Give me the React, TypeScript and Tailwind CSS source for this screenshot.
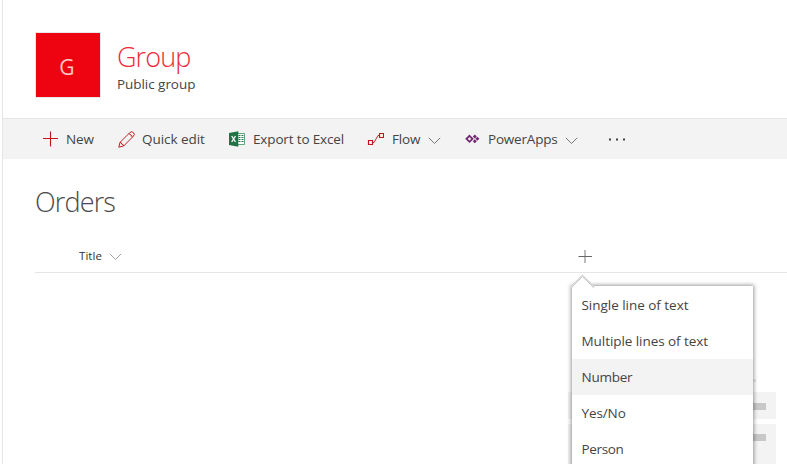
import type { ReactNode } from "react";

function Chevron({ className, color = "#767676" }: { className?: string; color?: string }) {
  return (
    <svg width="13" height="8" viewBox="0 0 13 8" fill="none" className={className}>
      <path d="M0.8 0.8 6.5 6.5 12.2 0.8" stroke={color} strokeWidth="1" />
    </svg>
  );
}

function PlusIcon() {
  return (
    <svg width="16" height="16" viewBox="0 0 16 16" fill="none" stroke="#c4141e" strokeWidth="1.1">
      <path d="M8.5 0.5v15M1 7.5h15" />
    </svg>
  );
}

function PencilIcon() {
  return (
    <svg width="17" height="17" viewBox="0 0 17 17" fill="none" stroke="#c4141e" strokeWidth="0.95">
      <path d="M0.8 16.2 2 11.4 11.8 1.6a2.4 2.4 0 0 1 3.6 3.6L5.6 15ZM2 11.4q1.8 0 1.8 1.8 1.8 0 1.8 1.8M10.8 2.6q2.6 1 3.6 3.6" />
    </svg>
  );
}

function ExcelIcon() {
  return (
    <svg width="16" height="16" viewBox="0 0 16 16">
      <path d="M8 2.5h7.5v11H8z" fill="#fff" stroke="#4f9a6e" strokeWidth="0.9" />
      <path d="M9.5 4.5h2M12.5 4.5h2M9.5 6.5h2M12.5 6.5h2M9.5 8.5h2M12.5 8.5h2M9.5 10.5h2M12.5 10.5h2" stroke="#217346" />
      <path d="M0 2 9.3 0.3v15.4L0 14Z" fill="#217346" />
      <path d="m2.7 5 3.8 6M6.5 5l-3.8 6" stroke="#fff" strokeWidth="1.3" />
    </svg>
  );
}

function FlowIcon() {
  return (
    <svg width="17" height="16" viewBox="0 0 17 16" fill="none" stroke="#c4141e">
      <path d="M1.5 9.5h4v4h-4zM12.5 2.5h4v4h-4z" strokeWidth="1.15" />
      <path d="M5.5 11.5H7l4-7h1.5" strokeWidth="0.9" />
    </svg>
  );
}

function PowerAppsIcon() {
  return (
    <svg width="15" height="16" viewBox="0 0 15 16" fill="none" stroke="#742774">
      <path d="m4.5 4.8 3 3-3 3-3-3Z" strokeWidth="1.8" />
      <path d="m9.8 3.4 2 2-2 2-2-2ZM12.4 5.8l2 2-2 2-2-2ZM9.8 8.2l2 2-2 2-2-2Z" fill="#742774" stroke="none" />
    </svg>
  );
}

function Command({ icon, children, className }: { icon: ReactNode; children: ReactNode; className: string }) {
  return (
    <button className={`flex h-full shrink-0 items-center whitespace-nowrap text-left ${className}`}>
      <span className="w-6 shrink-0">{icon}</span>
      {children}
    </button>
  );
}

const columnTypes = [
  { label: "Single line of text", tracking: "tracking-[-0.03px]" },
  { label: "Multiple lines of text", tracking: "tracking-[-0.06px]" },
  { label: "Number", tracking: "tracking-[-0.25px]", active: true },
  { label: "Yes/No", tracking: "tracking-[-0.1px]" },
  { label: "Person", tracking: "tracking-[-0.35px]" },
];

function ColumnMenu() {
  return (
    <div className="absolute left-[569px] top-[286px] h-[220px] w-[181px]">
      <div className="absolute inset-0 bg-white shadow-[0_0_4px_1px_rgba(0,0,0,0.4)]" />
      <svg width="28" height="14" viewBox="0 0 28 14" className="absolute -left-[2px] -top-[12px]">
        <path d="M1 13.5 12.5 2 24 13.5" fill="#fff" stroke="#dcdcdc" strokeWidth="2.6" />
        <path d="M1.5 13.5 12.5 2.5 23.5 13.5" fill="#fff" stroke="#c8c8c8" strokeWidth="1" />
        <path d="M2.5 14 12.5 3.5 23 14Z" fill="#fff" />
      </svg>
      <ul className="relative pt-px">
        {columnTypes.map((c) => (
          <li
            key={c.label}
            className={`flex h-9 items-center pl-[9.5px] text-[13.5px] ${c.tracking} ${c.active ? "bg-[#f3f3f3]" : ""}`}
          >
            {c.label}
          </li>
        ))}
      </ul>
    </div>
  );
}

export default function App() {
  return (
    <div className="h-[464px] w-[787px] overflow-hidden bg-white pl-[2px] font-['Open_Sans','Noto_Sans',sans-serif] text-[#444]">
      <div className="relative h-full border-l border-[#e5e5e5]">
        <header className="flex h-[118px] pl-[33px] pt-[33px]">
          <div className="flex size-16 items-center justify-center bg-[#ee0410] pr-[2px] pt-[5px] text-[21px] text-[#ffc8cb] outline outline-[#e8e8e8]">
            G
          </div>
          <div className="ml-[17px]">
            <h1 className="mt-[7px] text-[27px] font-light leading-[34px] tracking-[-0.9px] text-[#ee2a38]">Group</h1>
            <p className="mt-[2px] text-[13.5px] leading-[17px] tracking-[-0.05px]">Public group</p>
          </div>
        </header>
        <nav className="flex h-[41px] items-center border-t border-[#e5e5e5] bg-[#f3f3f3] pl-[39px] text-[13.5px]">
          <Command icon={<PlusIcon />} className="w-[76px]">
            <span className="tracking-[-0.15px]">New</span>
          </Command>
          <Command icon={<PencilIcon />} className="w-[111px]">
            <span className="tracking-[-0.05px]">Quick edit</span>
          </Command>
          <Command icon={<ExcelIcon />} className="w-[138px]">
            <span className="tracking-[-0.15px]">Export to Excel</span>
          </Command>
          <Command icon={<FlowIcon />} className="w-[98px]">
            <span className="w-[37px] pl-px tracking-[-0.2px]">Flow</span>
            <Chevron className="mt-[4px]" />
          </Command>
          <Command icon={<PowerAppsIcon />} className="w-[143px]">
            <span className="-ml-px w-[77px] tracking-[-0.2px]">PowerApps</span>
            <Chevron className="mt-[4px]" />
          </Command>
          <svg width="18" height="3" viewBox="0 0 18 3" fill="#404040" className="mt-[1px]">
            <path d="M1 .5h2v2H1zM8 .5h2v2H8zM15 .5h2v2h-2z" />
          </svg>
        </nav>
        <main className="pl-8">
          <h2 className="pt-[24px] text-[27px] font-light leading-[38px] tracking-[-0.85px] text-[#4a4a4a]">Orders</h2>
          <div className="mt-[19px] flex h-[33px] items-center border-b border-[#e5e5e5] pl-[44px] text-[11.5px]">
            <span className="w-[30px] tracking-[0.05px] text-[#333]">Title</span>
            <Chevron className="mt-[2px]" color="#a0a0a0" />
            <svg width="15" height="15" viewBox="0 0 15 15" className="ml-[456px]">
              <path d="M7 1v13" stroke="#b5b5b5" strokeWidth="1.8" />
              <path d="M0.5 7.5h13.5" stroke="#666" />
            </svg>
          </div>
          <div className="ml-[533px] mt-[119px] w-[208px] space-y-[5px]">
            <div className="relative flex h-[27px] items-start justify-end bg-[#f3f3f3] pr-[10px] pt-[11px]">
              <div className="absolute -top-[13px] right-[20px] h-[3px] w-6 bg-[#eaeaea]" />
              <div className="h-[7px] w-10 bg-[#c8c8c8]" />
            </div>
            <div className="flex h-[41px] items-start justify-end bg-[#f3f3f3] pr-[10px] pt-[10px]">
              <div className="h-[7px] w-10 bg-[#c8c8c8]" />
            </div>
          </div>
        </main>
        <ColumnMenu />
      </div>
    </div>
  );
}
